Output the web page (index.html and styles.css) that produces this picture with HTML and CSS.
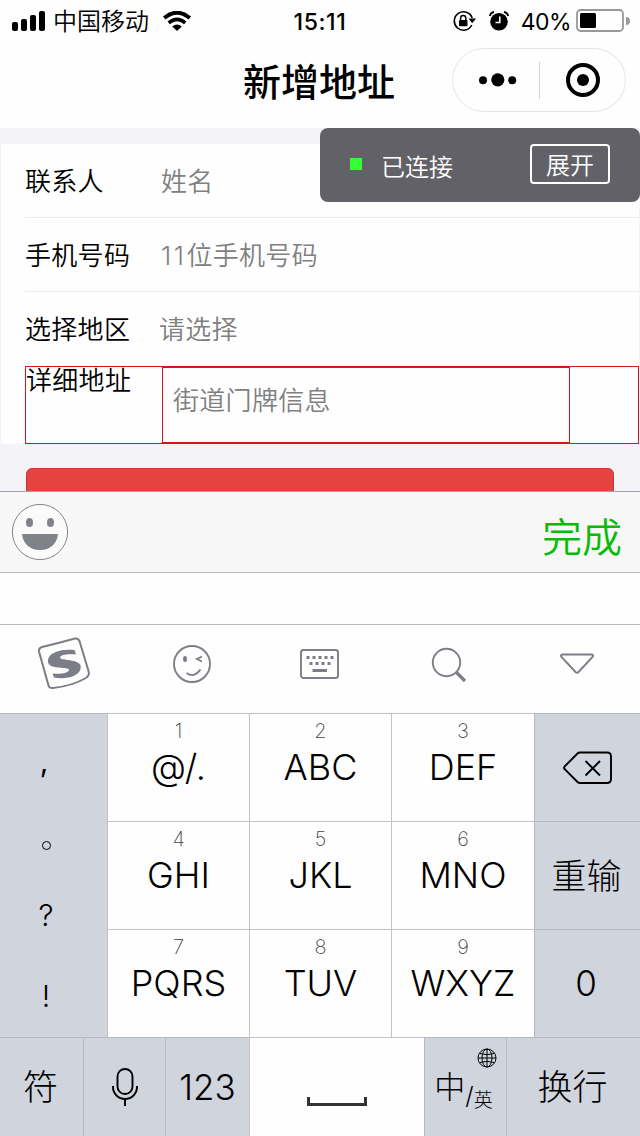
FILE: index.html
```
<!DOCTYPE html>
<html lang="zh-CN">
  <head>
    <meta charset="UTF-8" />
    <meta name="viewport" content="width=device-width, initial-scale=1.0" />
    <title>新增地址</title>
    <link rel="stylesheet" href="styles.css">
  </head>

  <body>
    <div class="status-bar">
      <div class="status-left">
        <svg class="signal" width="34" height="20" viewBox="0 0 34 20">
          <rect x="0" y="11" width="6" height="9" rx="2" />
          <rect x="9" y="8" width="6" height="12" rx="2" />
          <rect x="18" y="4" width="6" height="16" rx="2" />
          <rect x="27" y="0" width="6" height="20" rx="2" />
        </svg>
        <span class="carrier">中国移动</span>
        <svg class="wifi" width="28" height="20" viewBox="0 0 28 20">
          <path d="M1.2 7 Q14 -3.5 26.8 7" fill="none" stroke="#000" stroke-width="4" />
          <path d="M5.7 11.8 Q14 4.8 22.3 11.8" fill="none" stroke="#000" stroke-width="3.6" />
          <path d="M9.2 15.4 Q14 11.4 18.8 15.4 L14 20 Z" />
        </svg>
      </div>
      <span class="time">15:11</span>
      <div class="status-right">
        <svg width="23" height="22" viewBox="0 0 23 22">
          <path d="M18.8 15 A9.2 9.2 0 1 1 19.2 8" fill="none" stroke="#000" stroke-width="1.6" />
          <path d="M15.5 8.5 H23 L19.2 13.2 Z" />
          <rect x="6" y="10" width="8.5" height="6.2" rx="1" />
          <path d="M7.6 10.5 V8 a2.6 2.6 0 0 1 5.2 0 V10.5" fill="none" stroke="#000" stroke-width="1.5" />
        </svg>
        <svg class="alarm" width="20" height="20" viewBox="0 0 20 20">
          <circle cx="10" cy="10.8" r="8.8" />
          <path d="M0.8 5 Q1.5 1.7 5 1 M15 1 Q18.5 1.7 19.2 5" fill="none" stroke="#000" stroke-width="1.8" />
          <path d="M10.8 5.5 V11.5 H6.5" fill="none" stroke="#fff" stroke-width="1.6" />
        </svg>
        <span class="percent">40%</span>
        <svg class="battery" width="54" height="24" viewBox="0 0 54 24">
          <rect x="1" y="1" width="46" height="21" rx="3.5" fill="none" stroke="#999" stroke-width="1.8" />
          <rect x="4" y="4" width="16" height="15" rx="1.5" />
          <path d="M50 8 a4 4 0 0 1 0 8 Z" fill="#999" />
        </svg>
      </div>
    </div>

    <div class="nav">
      <h1>新增地址</h1>
      <div class="capsule">
        <div class="capsule-menu">
          <svg width="38" height="14" viewBox="0 0 38 14">
            <circle cx="4" cy="7.3" r="4" />
            <circle cx="18.8" cy="6.8" r="6.6" />
            <circle cx="33.2" cy="7.3" r="4" />
          </svg>
        </div>
        <div class="capsule-close">
          <svg width="34" height="34" viewBox="0 0 34 34">
            <circle cx="17" cy="17" r="15" fill="none" stroke="#000" stroke-width="4" />
            <circle cx="17" cy="17" r="6" />
          </svg>
        </div>
      </div>
    </div>

    <div class="debug">
      <span class="dot"></span>
      <span class="debug-text">已连接</span>
      <span class="debug-btn">展开</span>
    </div>

    <div class="page">
      <div class="form">
        <div class="row">
          <label>联系人</label>
          <span class="placeholder">姓名</span>
        </div>
        <div class="row">
          <label>手机号码</label>
          <span class="placeholder"><span class="digits">11</span>位手机号码</span>
        </div>
        <div class="row last">
          <label>选择地区</label>
          <span class="placeholder picker">请选择</span>
        </div>
        <div class="detail">
          <label>详细地址</label>
          <div class="textarea">街道门牌信息</div>
        </div>
      </div>
      <div class="save"></div>
    </div>

    <div class="accessory">
      <svg width="58" height="58" viewBox="0 0 58 58">
        <circle cx="29" cy="29" r="27.6" fill="#fafafa" stroke="#85868c" stroke-width="1" />
        <ellipse cx="18.5" cy="19.5" rx="3.5" ry="4.6" fill="#80828a" />
        <ellipse cx="39.5" cy="19.5" rx="3.5" ry="4.6" fill="#80828a" />
        <path d="M11 31 H47 C46 41 39 47 29 47 S12 41 11 31 Z" fill="#80828a" />
      </svg>
      <span class="done">完成</span>
    </div>

    <div class="candidates"></div>

    <div class="tools">
      <div class="tool">
        <svg width="54" height="54" viewBox="0 0 54 54" fill="none" stroke="#7c7e87" stroke-width="2">
          <path d="M5 10 Q22 6 38 1.5 Q41 1 42.5 4 L51.5 34 Q53 38.5 49 41 Q35 49 16 51 Q12.5 51.5 11.5 48.5 L2 14.5 Q1.5 11 5 10 Z" />
          <path d="M37.5 13 L39 17.5 C32 16.5 23 17.5 23 20.5 C23 24 43 21.5 43.8 29.5 C44.3 39.5 28 43 17 40.5 L15.5 36.5 C23 37.5 32 36 32 32.8 C32 29.5 12 33 11 25 C10.5 14.5 26 12 37.5 13 Z" fill="#7c7e87" stroke="none" />
        </svg>
      </div>
      <div class="tool">
        <svg width="40" height="40" viewBox="0 0 40 40" fill="none" stroke="#7c7e87" stroke-width="1.9">
          <circle cx="20" cy="20" r="18" />
          <ellipse cx="13" cy="15" rx="2" ry="3" fill="#7c7e87" stroke="none" />
          <path d="M30 12.5 L25 15 L30 17.5 M14.5 29 Q22 34.5 28.5 25.5" />
        </svg>
      </div>
      <div class="tool">
        <svg width="40" height="32" viewBox="0 0 40 32" fill="none" stroke="#7c7e87">
          <rect x="1" y="2" width="37" height="28" rx="2.5" stroke-width="1.9" />
          <path d="M6.5 9.5 H34 M9.5 15.5 H31" stroke-width="3" stroke-dasharray="3 3" />
          <path d="M12.5 22.5 H27" stroke-width="3" />
        </svg>
      </div>
      <div class="tool search">
        <svg width="36" height="36" viewBox="0 0 36 36" fill="none" stroke="#7c7e87">
          <circle cx="15.5" cy="15.5" r="13.7" stroke-width="1.9" />
          <path d="M25.5 25.5 L34 34" stroke-width="3.2" />
        </svg>
      </div>
      <div class="tool">
        <svg width="36" height="24" viewBox="0 0 36 24" fill="none" stroke="#7c7e87" stroke-width="1.9">
          <path d="M4.5 2.5 H33.5 Q36 3 34.5 5 L20.5 20 Q19 21.5 17.5 20 L3.5 5 Q2 3 4.5 2.5 Z" />
        </svg>
      </div>
    </div>

    <div class="keypad">
      <div class="marks">
        <span class="comma">,</span>
        <span class="period"></span>
        <span>?</span>
        <span>!</span>
      </div>
      <div class="key"><small>1</small><b>@/.</b></div>
      <div class="key"><small>2</small><b>ABC</b></div>
      <div class="key"><small>3</small><b>DEF</b></div>
      <div class="key side">
        <svg width="50" height="34" viewBox="0 0 50 34" fill="none" stroke="#000" stroke-width="1.9">
          <path d="M17 1.5 H44 Q48 1.5 48 5.5 V28 Q48 32 44 32 H17 Q15.5 32 14.5 31 L1.5 18 Q0.6 16.8 1.5 15.6 L14.5 2.5 Q15.5 1.5 17 1.5 Z" />
          <path d="M22.5 10 L37 24.5 M37 10 L22.5 24.5" />
        </svg>
      </div>
      <div class="key"><small>4</small><b>GHI</b></div>
      <div class="key"><small>5</small><b>JKL</b></div>
      <div class="key"><small>6</small><b>MNO</b></div>
      <div class="key side retype">重输</div>
      <div class="key"><small>7</small><b>PQRS</b></div>
      <div class="key"><small>8</small><b>TUV</b></div>
      <div class="key"><small>9</small><b>WXYZ</b></div>
      <div class="key side zero">0</div>
    </div>

    <div class="bottom-keys">
      <div class="key side text">符</div>
      <div class="key side">
        <svg width="28" height="40" viewBox="0 0 28 40" fill="none" stroke="#000" stroke-width="1.9">
          <rect x="6.5" y="2" width="15" height="25" rx="7.5" />
          <path d="M2 19 V20 A12 12 0 0 0 26 20 V19 M14 32 V39" />
        </svg>
      </div>
      <div class="key side num">123</div>
      <div class="key space">
        <svg width="60" height="10" viewBox="0 0 60 10">
          <path d="M1.5 0 V7.5 H58.5 V0" fill="none" stroke="#333" stroke-width="3" />
        </svg>
      </div>
      <div class="key side lang">
        <span class="zh">中</span><span class="slash">/</span><span class="en">英</span>
        <svg class="globe" width="20" height="20" viewBox="0 0 20 20" fill="none" stroke="#000" stroke-width="1">
          <circle cx="10" cy="10" r="9" />
          <ellipse cx="10" cy="10" rx="5" ry="9" />
          <path d="M10 1 V19 M1 10 H19 M3 5.5 Q10 8 17 5.5 M3 14.5 Q10 12 17 14.5" />
        </svg>
      </div>
      <div class="key side text">换行</div>
    </div>
  </body>
</html>
```
FILE: styles.css
```
* {
  box-sizing: border-box;
}

body {
  display: flex;
  flex-direction: column;
  width: 640px;
  height: 1136px;
  margin: 0;
  overflow: hidden;
  background-color: #fefefe;
  color: #000;
  font-family: Inter, "Noto Sans CJK SC", sans-serif;
}

svg {
  display: block;
  flex-shrink: 0;
}

.status-bar {
  display: grid;
  grid-template-columns: 1fr 60px 1fr;
  align-items: center;
  height: 40px;
  font-size: 23px;
  line-height: 40px;
}

.status-left {
  display: flex;
  align-items: center;
  padding-left: 12px;
}

.carrier {
  margin: 2px 0 0 7px;
  font-size: 24px;
  font-weight: 350;
}

.wifi {
  margin-left: 14px;
}

.time {
  margin: 2px -5px 0 -5px;
  font-weight: 500;
  letter-spacing: 0.6px;
  text-align: center;
  white-space: nowrap;
}

.status-right {
  display: flex;
  align-items: center;
  justify-content: flex-end;
  padding-right: 10px;
}

.alarm {
  margin: 0 12px 0 13px;
}

.percent {
  margin: 2px 5px 0 0;
  letter-spacing: -0.6px;
}

.nav {
  display: flex;
  justify-content: flex-end;
  align-items: flex-start;
  height: 88px;
  padding: 8px 14px 0 0;
}

h1 {
  width: 160px;
  margin: 0 53px 0 0;
  font-size: 38px;
  font-weight: 500;
  line-height: 68px;
  text-align: center;
  white-space: nowrap;
}

.capsule {
  display: flex;
  align-items: center;
  width: 174px;
  height: 64px;
  border: 1px solid #e6e6e6;
  border-radius: 32px;
}

.capsule-menu,
.capsule-close {
  display: flex;
  justify-content: center;
  align-items: center;
  height: 37px;
}

.capsule-menu {
  width: 87px;
  padding-left: 4px;
  border-right: 1px solid #d2d2d2;
}

.capsule-close {
  width: 85px;
}

/* floats over the form */
.debug {
  position: absolute;
  top: 128px;
  right: 0;
  display: flex;
  align-items: center;
  width: 320px;
  height: 74px;
  padding: 0 30px;
  border-radius: 8px;
  background-color: #626167;
  color: #fff;
  font-size: 24px;
  font-weight: 350;
}

.dot {
  width: 12px;
  height: 12px;
  margin: -2px 19px 0 0;
  background-color: #3f3;
}

.debug-btn {
  width: 80px;
  height: 40px;
  margin: -2px 0 0 auto;
  border: 2px solid #fff;
  border-radius: 4px;
  line-height: 39px;
  text-align: center;
}

.page {
  height: 363px;
  padding: 16px 1px 0;
  overflow: hidden;
  background-color: #f3f3f8;
}

.form {
  height: 300px;
  padding-left: 24px;
  background-color: #fefefe;
  font-size: 26px;
  letter-spacing: 0.3px;
}

.row {
  display: flex;
  align-items: center;
  height: 74px;
  padding-bottom: 2px;
  border-bottom: 1px solid #ebebeb;
}

.row.last {
  padding-bottom: 4px;
  border-bottom: none;
}

label {
  width: 136px;
  font-weight: 350;
}

.placeholder,
.textarea {
  color: #808080;
  font-weight: 350;
}

.digits {
  letter-spacing: 2.5px;
}

.picker {
  margin-left: -2px;
}

.detail {
  display: flex;
  height: 78px;
  border: 1px solid #d11818;
  line-height: 27px;
}

.textarea {
  width: 408px;
  padding: 19px 10px;
  border: 1px solid #d11818;
}

.save {
  height: 80px;
  margin: 24px 25px 0;
  border: 1px solid #c6373b;
  border-radius: 6px;
  background-color: #e64340;
}

.accessory {
  display: flex;
  justify-content: space-between;
  align-items: center;
  height: 82px;
  padding: 0 18px 0 11px;
  border-top: 1px solid #a4a4a6;
  border-bottom: 1px solid #b8b8ba;
  background-color: #f7f7f7;
}

.done {
  padding-top: 12px;
  color: #09bb07;
  font-size: 40px;
  font-weight: 350;
  line-height: 80px;
}

.candidates {
  height: 51px;
}

.tools {
  display: flex;
  height: 89px;
  padding-bottom: 10px;
  border-top: 1px solid #b8b8ba;
}

.tool {
  display: flex;
  flex: 0 0 128px;
  justify-content: center;
  align-items: center;
}

.search {
  padding: 2px 0 0 2px;
}

.keypad {
  display: grid;
  grid-template-columns: 107px 142px 142px 143px 106px;
  grid-template-rows: repeat(3, 108px);
}

.marks {
  display: flex;
  flex-direction: column;
  align-items: center;
  grid-row: span 3;
  height: 324px;
  padding-top: 29px;
  border-top: 1px solid #b9bbc1;
  background-color: #d0d4dd;
  font-size: 30px;
  font-weight: 300;
}

.marks span {
  flex-shrink: 0;
  height: 81px;
  margin-right: 15px;
}

.marks span:last-child {
  height: 40px;
}

.marks .comma {
  height: 98px;
  margin-right: 19px;
  font-weight: 400;
}

.marks .period {
  width: 9px;
  height: 9px;
  margin-bottom: 47px;
  border: 1.5px solid #000;
  border-radius: 50%;
}

.key {
  display: flex;
  flex-direction: column;
  align-items: center;
  border-top: 1px solid #c2c4c9;
  border-left: 1px solid #c2c4c9;
}

.key small {
  margin-top: 5px;
  color: #444;
  font-size: 20px;
  font-weight: 250;
  line-height: 24px;
}

.key b {
  font-size: 36px;
  font-weight: 300;
  line-height: 48px;
}

.key.side {
  justify-content: center;
  border-color: #b5b8c0;
  background-color: #d0d4dd;
  font-size: 35px;
  font-weight: 300;
}

.key.retype {
  padding: 0 2px 4px 0;
}

.key.zero {
  padding: 0 3px 2px 0;
}

.key.text {
  padding: 0 2px 5px 0;
}

.bottom-keys {
  display: grid;
  grid-template-columns: 83px 82px 84px 175px 82px 134px;
  height: 99px;
}

.bottom-keys .key:first-child {
  border-left: none;
}

.key.space {
  justify-content: flex-end;
  padding-bottom: 29px;
}

.key.lang {
  position: relative;
  flex-direction: row;
  padding: 0 4px 5px 0;
  font-size: 31px;
}

.slash {
  margin-top: 22px;
  font-size: 24px;
}

.en {
  margin-top: 27px;
  font-size: 19px;
}

.globe {
  position: absolute;
  top: 10px;
  right: 9px;
}
```
